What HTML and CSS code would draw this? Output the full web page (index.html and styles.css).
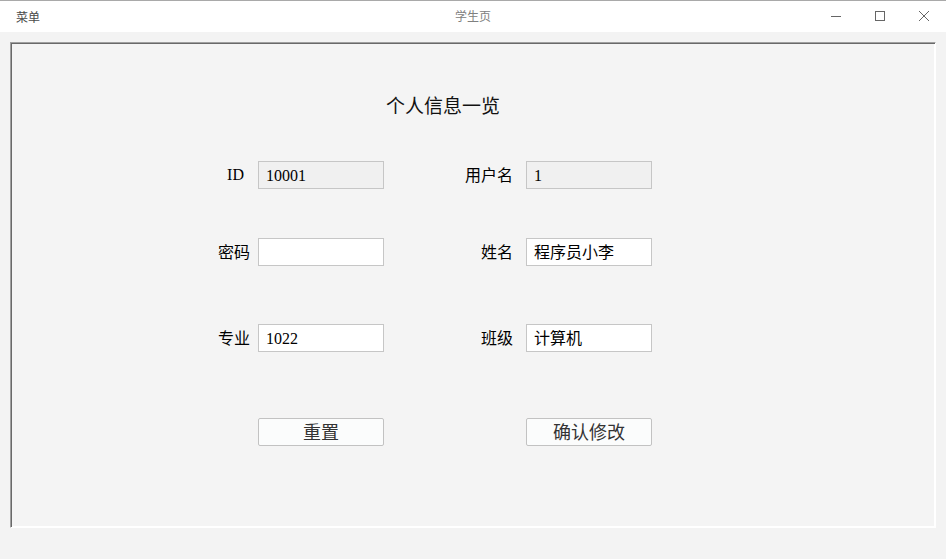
FILE: index.html
```html
<!DOCTYPE html>
<html lang="zh">
<head>
<meta charset="utf-8">
<title>学生页</title>
<link rel="stylesheet" href="styles.css">
</head>
<body>
<header class="titlebar">
  <span class="menu">菜单</span>
  <span class="wtitle">学生页</span>
  <div class="controls">
    <span class="ctl"><svg width="12" height="12" viewBox="0 0 12 12"><path d="M1 6.5H11" stroke="#666" stroke-width="1"/></svg></span>
    <span class="ctl"><svg width="12" height="12" viewBox="0 0 12 12"><rect x="1.5" y="1.5" width="9" height="9" fill="none" stroke="#666" stroke-width="1"/></svg></span>
    <span class="ctl"><svg width="12" height="12" viewBox="0 0 12 12"><path d="M1 1L11 11M11 1L1 11" stroke="#666" stroke-width="1"/></svg></span>
  </div>
</header>
<main class="main">
  <section class="panel">
    <h1 class="heading">个人信息一览</h1>
    <div class="form">
      <label class="lbl lbl-latin">ID</label>
      <div class="field ro">10001</div>
      <label class="lbl lbl-b">用户名</label>
      <div class="field ro">1</div>

      <label class="lbl r2">密码</label>
      <div class="field r2"></div>
      <label class="lbl lbl-b r2">姓名</label>
      <div class="field r2">程序员小李</div>

      <label class="lbl r3">专业</label>
      <div class="field r3">1022</div>
      <label class="lbl lbl-b r3">班级</label>
      <div class="field r3">计算机</div>

      <span class="r4"></span>
      <button class="btn r4">重置</button>
      <span class="r4"></span>
      <button class="btn r4">确认修改</button>
    </div>
  </section>
</main>
</body>
</html>
```

FILE: styles.css
```css
* { box-sizing: border-box; }
html, body { margin: 0; padding: 0; }
body {
  width: 946px;
  height: 559px;
  background: #f3f3f3;
  font-family: "Liberation Serif", "Noto Sans CJK SC", serif;
  overflow: hidden;
}
.titlebar {
  height: 32px;
  background: #ffffff;
  border-top: 1px solid #a9a9a9;
  position: relative;
  display: flex;
  align-items: center;
  font-family: "Noto Sans CJK SC", "Liberation Sans", sans-serif;
  font-size: 12px;
}
.menu {
  margin-left: 16px;
  color: #4a4a4a;
  line-height: 14px;
}
.wtitle {
  position: absolute;
  left: 0;
  right: 0;
  top: 8px;
  text-align: center;
  color: #808080;
  line-height: 14px;
  pointer-events: none;
}
.controls {
  margin-left: auto;
  display: flex;
  margin-right: 0;
}
.ctl {
  width: 44px;
  height: 31px;
  display: flex;
  align-items: center;
  justify-content: center;
  padding-bottom: 1px;
}
.main {
  padding: 10px 10px 0 10px;
}
.panel {
  width: 926px;
  height: 486px;
  background: #f4f4f4;
  border-top: 1px solid #a0a0a0;
  border-left: 1px solid #a0a0a0;
  border-right: 1px solid #ffffff;
  border-bottom: 1px solid #ffffff;
  box-shadow: inset 1px 1px 0 #696969, inset -1px -1px 0 #ffffff;
  padding-top: 50px;
}
.heading {
  margin: 0;
  text-align: center;
  font-family: "Noto Sans CJK SC", serif;
  font-weight: normal;
  font-size: 19px;
  line-height: 24px;
  color: #111;
  padding-right: 60px;
}
.form {
  display: grid;
  grid-template-columns: 60px 126px 126px 126px;
  column-gap: 8px;
  margin-left: 179px;
  margin-top: 44px;
}
.lbl {
  text-align: right;
  font-family: "Noto Sans CJK SC", serif;
  font-size: 16px;
  line-height: 27px;
  height: 28px;
  color: #000;
}
.lbl-b {
  padding-right: 5px;
}
.lbl-latin {
  font-family: "Liberation Serif", serif;
  padding-right: 6px;
}
.field {
  height: 28px;
  border: 1px solid #c6c6c6;
  background: #ffffff;
  padding-left: 7px;
  font-family: "Liberation Serif", "Noto Sans CJK SC", serif;
  font-size: 16px;
  line-height: 27px;
  color: #000;
}
.field.ro {
  background: #f0f0f0;
}
.r2 { margin-top: 49px; }
.r3 { margin-top: 58px; }
.r4 { margin-top: 66px; }
.btn {
  height: 28px;
  border: 1px solid #c2c2c2;
  border-radius: 2px;
  background: #fbfcfc;
  font-family: "Noto Sans CJK SC", serif;
  font-size: 18px;
  line-height: 22px;
  color: #333;
  padding: 0 0 3px 0;
}
```
